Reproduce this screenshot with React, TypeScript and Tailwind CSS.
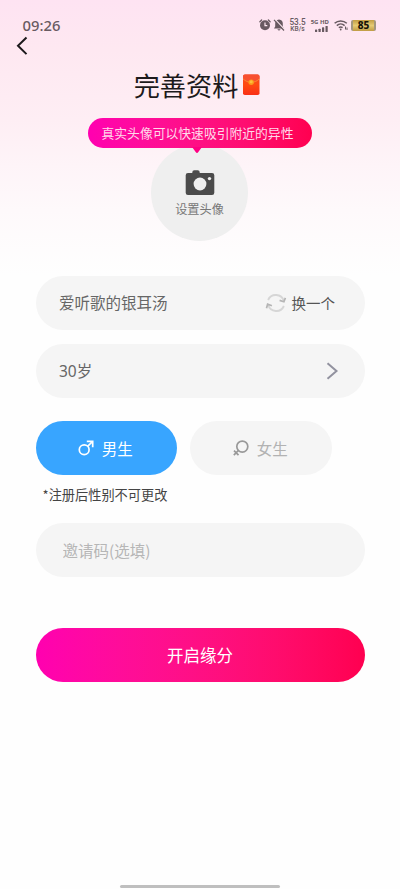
import { useState } from "react";

function StatusBar() {
  return (
    <div className="flex h-[50px] items-center justify-between pl-[22.500px] pr-[24px] text-[#685a61]">
      <span className="font-['Noto_Sans',sans-serif] text-[14.800px] font-medium leading-none">09:26</span>
      <div className="flex items-center">
        {/* Alarm */}
        <svg className="h-[12px] w-[12px]" viewBox="0 0 12 12">
          <circle cx="6" cy="6.300" r="5" fill="currentColor" />
          <path d="M.9 2.700 2.600 1M11.100 2.700 9.400 1" stroke="currentColor" strokeWidth="1.300" strokeLinecap="round" />
          <path d="M6 3.600v3.100h2.300" fill="none" stroke="#fde8f1" strokeWidth="1.200" />
        </svg>
        {/* Muted bell */}
        <svg className="ml-[2px] h-[12px] w-[12px]" viewBox="0 0 12 12">
          <path d="M6 .6C3.400.9 2.200 2.600 2.200 4.600v2.800L1 9.400h10L9.800 7.400V4.600C9.800 2.600 8.600.9 6 .6zM4.200 10.200h3.600L6 11.800z" fill="currentColor" />
          <path d="M2 .4 12 11" stroke="#fde8f1" strokeWidth="1.300" />
          <path d="M1 .9 11 11.500" stroke="currentColor" strokeWidth="1.200" />
        </svg>
        <div className="ml-[4px] flex w-[17px] flex-col items-center font-['Roboto',sans-serif] font-medium">
          <span className="text-[8.200px] leading-[8px]">53.5</span>
          <span className="text-[6.600px] leading-[7px]">KB/s</span>
        </div>
        <div className="ml-[4px] flex w-[19px] flex-col items-end">
          <span className="whitespace-nowrap font-['Noto_Sans',sans-serif] text-[6px] font-bold leading-[7px]">5G HD</span>
          <svg className="mr-px h-[6px] w-[13px]" viewBox="0 0 13 6" fill="currentColor">
            <rect x="0" y="3.500" width="2.200" height="2.500" rx=".6" />
            <rect x="3.500" y="2.700" width="2.200" height="3.300" rx=".6" />
            <rect x="7" y="1.300" width="2.200" height="4.700" rx=".6" />
            <rect x="10.500" y="0" width="2.200" height="6" rx=".6" />
          </svg>
        </div>
        <svg className="ml-[5px] h-[12px] w-[14px]" viewBox="0 0 14 12" fill="none" stroke="currentColor" strokeWidth="1.500">
          <path d="M.6 4.300a9 9 0 0 1 12.200 0M2.800 6.600a5.800 5.800 0 0 1 7.800 0M4.800 8.700a3 3 0 0 1 3.800 0" />
          <circle cx="6.700" cy="10.500" r=".9" fill="currentColor" stroke="none" />
          <path d="M11.500 7.500v3M13 8.500v2.500" strokeWidth="1" />
        </svg>
        <div className="ml-[3px] flex h-[11px] w-[25px] items-center justify-center rounded-[2px] border-x-2 border-[#a3977e] bg-linear-to-b from-[#c19d43] via-[#e6cb74] to-[#c09b43] font-['Noto_Sans',sans-serif] text-[10px] font-extrabold leading-none text-[#171208]">
          85
        </div>
      </div>
    </div>
  );
}

function RedEnvelope() {
  return (
    <svg className="h-[22px] w-[18px]" viewBox="0 0 18 22">
      <defs>
        <linearGradient id="envelope" x1="0" y1="0" x2="0" y2="1">
          <stop offset="0" stopColor="#f4472b" />
          <stop offset="0.500" stopColor="#ff4a10" />
          <stop offset="1" stopColor="#f92f16" />
        </linearGradient>
      </defs>
      <rect x="1" y=".6" width="16.500" height="20.400" rx="1.800" fill="url(#envelope)" />
      <path d="M1 4V2.600a2 2 0 0 1 2-2h12.500a2 2 0 0 1 2 2v1.900C15 7 12.500 8.200 9.200 8.200S3.500 7 1 4.500z" fill="#f8502f" />
      <path d="M1 4.800C3.500 7.200 6 8.300 9.200 8.300s5.800-1.100 8.300-3.500" fill="none" stroke="#fb8f2c" strokeWidth=".9" />
      <circle cx="9.200" cy="8.200" r="2.700" fill="#fb9b1d" />
      <circle cx="9.200" cy="7.700" r="1.500" fill="#fdbf3c" />
    </svg>
  );
}

function CameraIcon() {
  return (
    <svg className="h-[27px] w-[30px]" viewBox="0 0 30 27">
      <path d="M3 4h4.300V3.300A2 2 0 0 1 9.300 1.300h3.400a2 2 0 0 1 2 2V4h12.300a2.300 2.300 0 0 1 2.300 2.300v17.400a2.300 2.300 0 0 1-2.300 2.300H3A2.300 2.300 0 0 1 .7 23.700V6.300A2.300 2.300 0 0 1 3 4z" fill="#4b4b4b" />
      <circle cx="15" cy="15" r="6.400" fill="#efefef" />
      <circle cx="24.500" cy="9.600" r="1.700" fill="#efefef" />
    </svg>
  );
}

function RefreshIcon() {
  return (
    <svg className="h-[20px] w-[22px]" viewBox="0 0 22 20" fill="none">
      <path d="M3.100 7A8.400 8.400 0 0 1 18.800 8" stroke="#d6d6d6" strokeWidth="1.900" />
      <path d="M18.900 13A8.400 8.400 0 0 1 3.200 12" stroke="#d6d6d6" strokeWidth="1.900" />
      <path d="M14.600 7.400 18.900 8.800 20.400 4.900" stroke="#b5b5b5" strokeWidth="1.700" />
      <path d="M1.500 15.300 2.600 11.200 6.900 12.800" stroke="#b5b5b5" strokeWidth="1.700" />
    </svg>
  );
}

function MaleIcon() {
  return (
    <svg className="h-[16px] w-[16px]" viewBox="0 0 16 16" fill="none" stroke="currentColor" strokeWidth="1.700">
      <circle cx="6.200" cy="9.800" r="4.900" />
      <path d="M9.600 6.400 14.500 1.500M8.800 1.300h5.900v5.900" />
    </svg>
  );
}

function FemaleIcon() {
  return (
    <svg className="h-[16px] w-[16px]" viewBox="0 0 16 16" fill="none" stroke="currentColor" strokeWidth="1.700">
      <circle cx="9.300" cy="6.600" r="5.500" />
      <path d="M5.500 10.400.8 15.100M1 10.600l4.500 4.500" />
    </svg>
  );
}

export default function App() {
  const [gender, setGender] = useState("male");
  const [inviteCode, setInviteCode] = useState("");

  return (
    <div className="flex h-[889px] w-[400px] flex-col bg-[#fefefe] bg-[linear-gradient(to_bottom,#fee3f2_0px,#fee8f1_50px,#feeef4_120px,#fef4f8_165px,#fef9fb_210px,#fefefe_275px)] font-['Noto_Sans_CJK_SC',sans-serif]">
      <StatusBar />

      {/* Header */}
      <header className="-mt-[14px] flex h-[20px] pl-[15px]">
        <button aria-label="返回">
          <svg className="h-[20px] w-[14px]" viewBox="0 0 14 20" fill="none" stroke="#1c191b" strokeWidth="2">
            <path d="M11.500 1.500 3 9.800l8.500 8.300" />
          </svg>
        </button>
      </header>
      <h1 className="mt-[9px] flex h-[40px] items-center justify-center gap-[4px] pr-[6px] text-[26.200px] font-normal leading-[40px] text-[#1c1a1b]">
        <span>完善资料</span>
        <RedEnvelope />
      </h1>

      {/* Avatar */}
      <section className="mt-[13px] flex flex-col items-center">
        <div className="relative z-10 flex h-[30px] w-[224px] items-center rounded-full bg-linear-to-r from-[#ff00b0] to-[#ff0050] pl-[13.500px] text-[12.800px] text-[#ffd9ea]">
          <span className="whitespace-nowrap">真实头像可以快速吸引附近的异性</span>
          <svg className="absolute left-[104px] top-[29px] h-[6px] w-[10px]" viewBox="0 0 10 6">
            <path d="M0 0h10L6.300 5a1.600 1.600 0 0 1-2.600 0z" fill="#ff0083" />
          </svg>
        </div>
        <button className="-mt-[4px] mr-px flex h-[97px] w-[97px] flex-col items-center rounded-full bg-[#efefef] pt-[25px]">
          <CameraIcon />
          <span className="mt-[4px] text-[12.200px] leading-[18px] text-[#777]">设置头像</span>
        </button>
      </section>

      {/* Profile form */}
      <main className="mt-[35px] flex flex-col px-[35.500px] text-[15.500px] text-[#666]">
        <div className="flex h-[54px] items-center justify-between rounded-full bg-[#f5f5f5] pl-[23.500px] pr-[29.500px]">
          <span>爱听歌的银耳汤</span>
          <button className="flex items-center gap-[5px] text-[14.500px] text-[#555]">
            <RefreshIcon />
            换一个
          </button>
        </div>
        <button className="mt-[14px] flex h-[54px] items-center justify-between rounded-full bg-[#f5f5f5] pl-[23.500px] pr-[25.500px]">
          <span className="pt-px font-['Noto_Sans','Noto_Sans_CJK_SC',sans-serif]">30岁</span>
          <svg className="h-[18px] w-[14px]" viewBox="0 0 14 18" fill="none" stroke="#92929f" strokeWidth="2">
            <path d="M2.500 1.200 11.500 9l-9 7.800" />
          </svg>
        </button>

        <div className="mt-[23px] flex gap-[13px]">
          <button
            onClick={() => setGender("male")}
            className={`flex h-[54px] w-[141.500px] items-center justify-center gap-[8px] rounded-full pr-[2px] ${gender === "male" ? "bg-[#38a5ff] text-white" : "bg-[#f5f5f5] text-[#b2b2b2]"}`}
          >
            <MaleIcon />
            <span className="pt-px">男生</span>
          </button>
          <button
            onClick={() => setGender("female")}
            className={`flex h-[54px] w-[141.500px] items-center justify-center gap-[8px] rounded-full pr-px ${gender === "female" ? "bg-[#ff4f9a] text-white" : "bg-[#f5f5f5] text-[#b2b2b2]"}`}
          >
            <span className={gender === "female" ? "text-white" : "text-[#999]"}>
              <FemaleIcon />
            </span>
            <span className="pt-px">女生</span>
          </button>
        </div>
        <p className="mt-[10px] pl-[7px] text-[13.200px] leading-[20px] text-[#444]">*注册后性别不可更改</p>

        <input
          value={inviteCode}
          onChange={(e) => setInviteCode(e.target.value)}
          placeholder="邀请码(选填)"
          className="mt-[18px] h-[54px] rounded-full bg-[#f5f5f5] pl-[27px] outline-none placeholder:text-[#b6b6b6]"
        />
        <button className="mt-[51px] h-[54px] rounded-full bg-linear-to-r from-[#ff00b0] to-[#ff0050] text-[16.500px] text-white">
          开启缘分
        </button>
      </main>

      {/* Home indicator */}
      <div className="mb-[1px] mt-auto h-[3px] w-[160px] self-center rounded-full bg-[#bfbfbf]" />
    </div>
  );
}
